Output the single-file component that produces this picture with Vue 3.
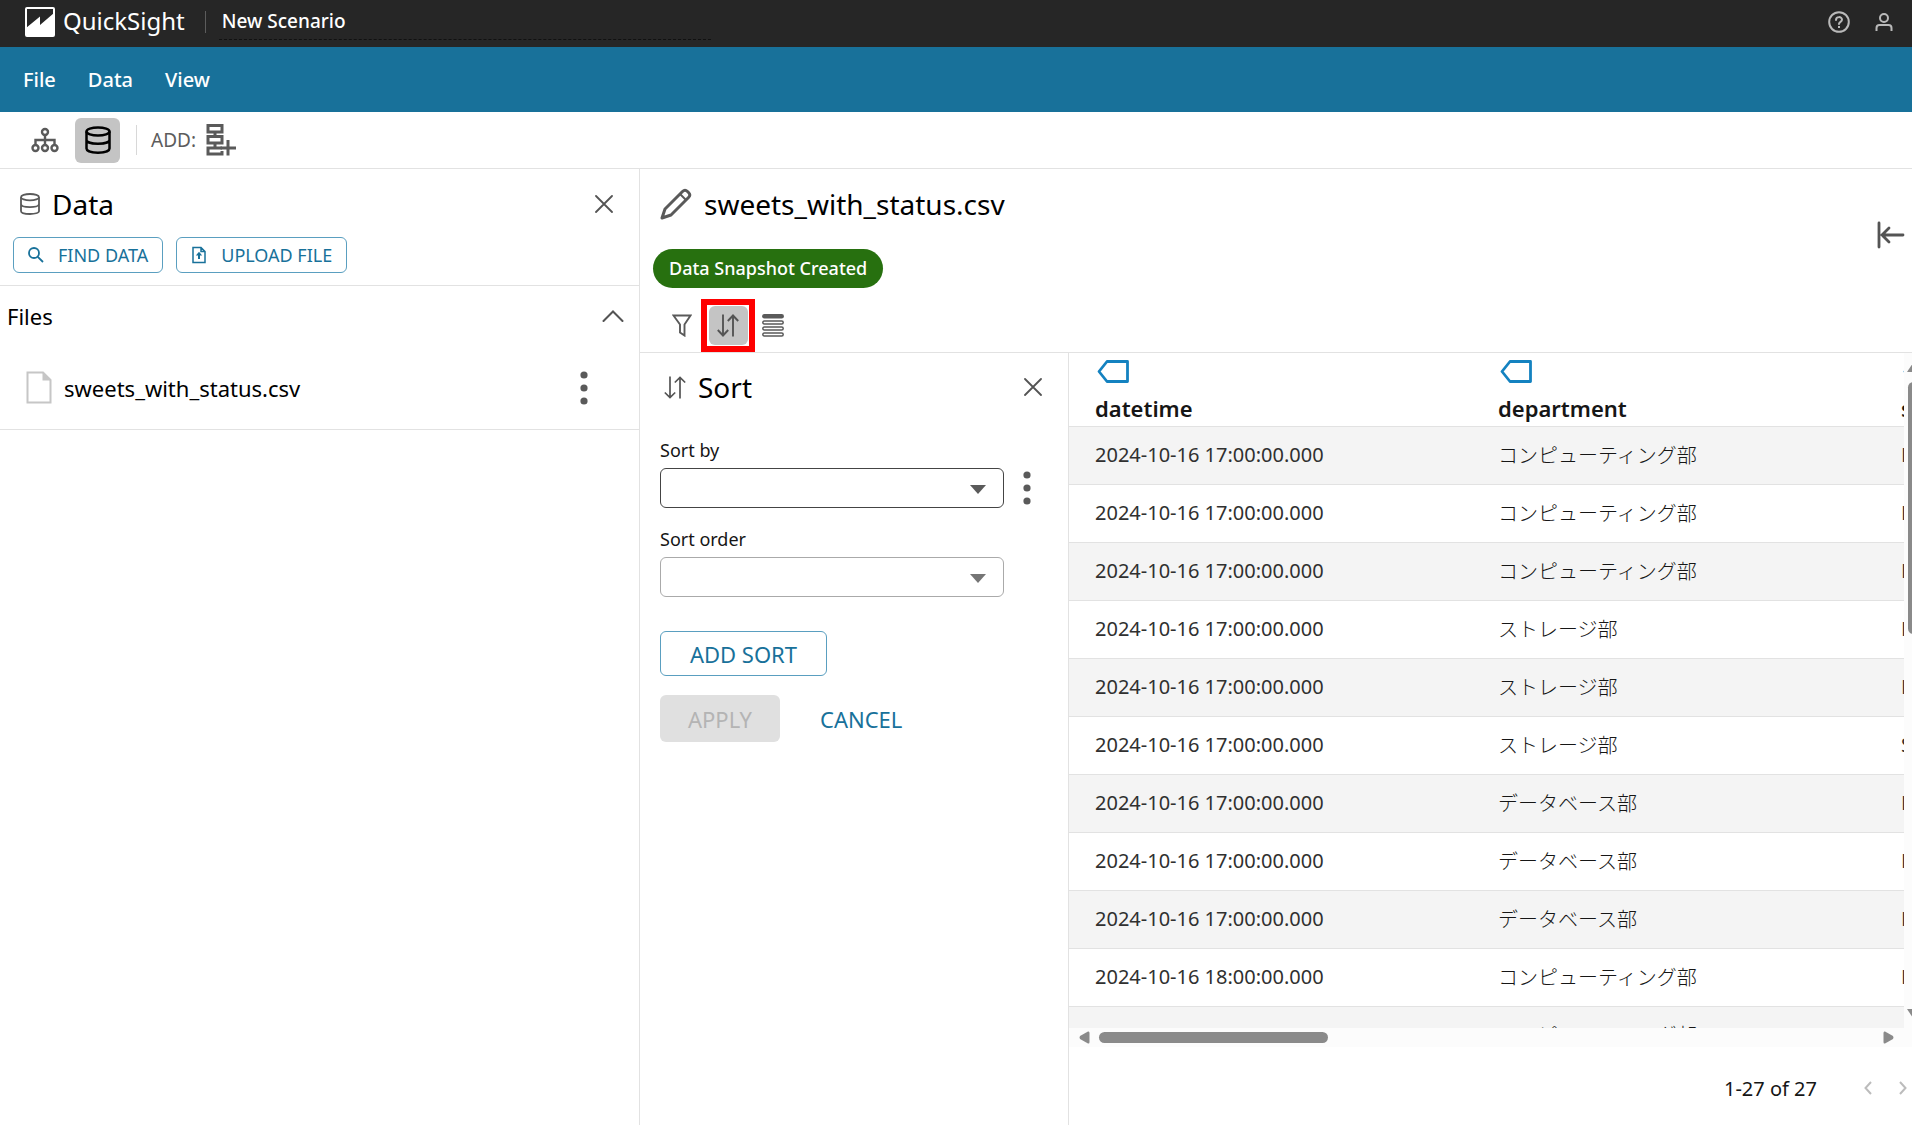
<script setup>
import { ref } from 'vue'

const scenario = ref('New Scenario')
const sortBy = ref('')
const sortOrder = ref('')

const columns = ['datetime', 'department', 's']

const day = '2024-10-16 '
const rows = [
  [day + '17:00:00.000', 'コンピューティング部', 'D'],
  [day + '17:00:00.000', 'コンピューティング部', 'D'],
  [day + '17:00:00.000', 'コンピューティング部', 'D'],
  [day + '17:00:00.000', 'ストレージ部', 'D'],
  [day + '17:00:00.000', 'ストレージ部', 'D'],
  [day + '17:00:00.000', 'ストレージ部', 'S'],
  [day + '17:00:00.000', 'データベース部', 'D'],
  [day + '17:00:00.000', 'データベース部', 'D'],
  [day + '17:00:00.000', 'データベース部', 'D'],
  [day + '18:00:00.000', 'コンピューティング部', 'D'],
  [day + '18:00:00.000', 'コンピューティング部', 'D'],
]
</script>

<template>
  <div class="app">
    <header class="topbar">
      <a class="brand" href="#">
        <svg width="30" height="30" viewBox="0 0 30 30" aria-hidden="true">
          <rect x="1" y="1" width="28" height="28" rx="1" fill="none" stroke="#fff" stroke-width="2" />
          <path d="M1 21 L15 9.500 L15 18 L29 6 V29 H1 Z" fill="#fff" />
        </svg>
        <span>QuickSight</span>
      </a>
      <span class="topbar-sep"></span>
      <input v-model="scenario" class="scenario" type="text" aria-label="Scenario name" />
      <div class="topbar-actions">
        <button type="button" aria-label="Help">
          <svg width="22" height="22" viewBox="0 0 22 22" fill="none" stroke="#b9b9b9" stroke-width="2">
            <circle cx="11" cy="11" r="9.8" />
            <path d="M8 9 C8 5.2 14 5.2 14 8.8 C14 11 11 10.8 11 13" stroke-linecap="round" />
            <rect x="10" y="15" width="2" height="2" fill="#b9b9b9" stroke="none" />
          </svg>
        </button>
        <button type="button" aria-label="Account">
          <svg width="18" height="20" viewBox="0 0 18 20" fill="none" stroke="#b9b9b9" stroke-width="2">
            <circle cx="9" cy="6" r="4" />
            <path d="M1.500 19 V16 Q1.500 13 4.500 13 H13.500 Q16.500 13 16.500 16 V19" />
          </svg>
        </button>
      </div>
    </header>

    <nav class="menubar">
      <a href="#">File</a>
      <a href="#">Data</a>
      <a href="#">View</a>
    </nav>

    <div class="toolbar">
      <button class="tool" type="button" aria-label="Diagram view">
        <svg width="28" height="26" viewBox="0 0 28 26" fill="none" stroke="#5a5a5a" stroke-width="2.400">
          <circle cx="14" cy="5" r="3" />
          <circle cx="4.500" cy="21" r="3" />
          <circle cx="14" cy="21" r="3" />
          <circle cx="23.500" cy="21" r="3" />
          <path d="M14 8 V18 M4.500 18 V13 H23.500 V18" />
        </svg>
      </button>
      <button class="tool active" type="button" aria-label="Data view">
        <svg width="26" height="28" viewBox="0 0 26 28" fill="none" stroke="#000" stroke-width="2.500">
          <ellipse cx="13" cy="5.500" rx="11.500" ry="4" />
          <path d="M1.500 5.500 V22.500 C1.500 28 24.500 28 24.500 22.500 V5.500 M1.500 14 C1.500 19 24.500 19 24.500 14" />
        </svg>
      </button>
      <span class="toolbar-sep"></span>
      <span class="add-label">ADD:</span>
      <button class="tool add" type="button" aria-label="Add step">
        <svg width="30" height="32" viewBox="0 0 30 32" fill="none" stroke="#5a5a5a" stroke-width="3">
          <path d="M2 1.500 H16 V8 H2 Z M2 12.500 H16 V19 H2 Z M9 8 V12.500 M9 19 V24 M16 24 H2 V30 H16 V27" />
          <path d="M22 16 V31.500 M14.500 24 H30" />
        </svg>
      </button>
    </div>

    <main class="workspace">
      <aside class="data-panel">
        <div class="data-head">
          <div class="title-row">
            <svg width="20" height="22" viewBox="0 0 20 22" fill="none" stroke="#5a5a5a" stroke-width="1.800">
              <ellipse cx="10" cy="4.200" rx="9" ry="3.200" />
              <path d="M1 4.200 V18 C1 22 19 22 19 18 V4.200 M1 11 C1 15.200 19 15.200 19 11" />
            </svg>
            <h2>Data</h2>
            <button class="close" type="button" aria-label="Close data panel">
              <svg width="18" height="18" viewBox="0 0 18 18" stroke="#545454" stroke-width="1.800" stroke-linecap="round">
                <path d="M1 1 L17 17 M17 1 L1 17" />
              </svg>
            </button>
          </div>
          <div class="data-actions">
            <button class="outline small" type="button">
              <svg width="16" height="16" viewBox="0 0 16 16" fill="none" stroke="#18719a" stroke-width="1.800">
                <circle cx="6" cy="6" r="5" />
                <path d="M9.800 9.800 L15 15" />
              </svg>
              <span>FIND DATA</span>
            </button>
            <button class="outline small" type="button">
              <svg width="16" height="18" viewBox="0 0 16 18" fill="none" stroke="#18719a" stroke-width="1.500">
                <path d="M2 1.500 H10 L14 5.500 V16.500 H2 Z M10 1.500 V5.500 H14" />
                <path d="M8 13 V9" stroke-width="2" />
                <path d="M4.800 9.500 L8 5.800 L11.200 9.500 Z" fill="#18719a" stroke="none" />
              </svg>
              <span>UPLOAD FILE</span>
            </button>
          </div>
        </div>
        <section class="files">
          <div class="files-head">
            <h3>Files</h3>
            <button type="button" aria-label="Collapse files">
              <svg width="22" height="12" viewBox="0 0 22 12" fill="none" stroke="#545454" stroke-width="2" stroke-linecap="round">
                <path d="M1.500 11 L11 1.500 L20.500 11" />
              </svg>
            </button>
          </div>
          <div class="file-row">
            <svg width="26" height="33" viewBox="0 0 26 33" fill="none" stroke="#c6c6c6" stroke-width="2">
              <path d="M1.500 1.500 H17 L24.500 9 V31.500 H1.500 Z" />
              <path d="M16.500 1 V9.500 H25 Z" fill="#c6c6c6" stroke="none" />
            </svg>
            <span>sweets_with_status.csv</span>
            <button type="button" aria-label="File options">
              <svg width="8" height="34" viewBox="0 0 8 34" fill="#5a5a5a">
                <circle cx="4" cy="4" r="3.600" />
                <circle cx="4" cy="17" r="3.600" />
                <circle cx="4" cy="30" r="3.600" />
              </svg>
            </button>
          </div>
        </section>
      </aside>

      <section class="content">
        <div class="content-head">
          <div class="head-main">
            <div class="title-row">
              <svg width="32" height="32" viewBox="0 0 32 32" fill="none" stroke="#5a5a5a" stroke-width="3" stroke-linejoin="round">
                <path d="M2 30 L5 21 L22.500 3.500 Q25 1 27.500 3.500 L28.500 4.500 Q31 7 28.500 9.500 L11 27 Z" />
                <path d="M20 6 L26 12" stroke-width="2" />
              </svg>
              <h1>sweets_with_status.csv</h1>
            </div>
            <span class="badge">Data Snapshot Created</span>
            <div class="data-tools">
              <button class="data-tool" type="button" aria-label="Filter">
                <svg width="20" height="23" viewBox="0 0 20 23" fill="none" stroke="#5a5a5a" stroke-width="1.900">
                  <path d="M1.500 1.500 H18.500 L12.500 10.500 V21.500 L8 18.500 V10.500 Z" />
                </svg>
              </button>
              <span class="highlight">
                <button class="data-tool active" type="button" aria-label="Sort">
                  <svg width="22" height="23" viewBox="0 0 22 23" fill="none" stroke="#545454" stroke-width="1.900">
                    <path d="M6 0.500 V21.500 M0.800 16 L6 21.500 L11.200 16 M16 22.500 V1.500 M10.800 7 L16 1.500 L21.200 7" />
                  </svg>
                </button>
              </span>
              <button class="data-tool rows" type="button" aria-label="Columns">
                <svg width="22" height="23" viewBox="0 0 22 23" fill="#fff" stroke="#5a5a5a" stroke-width="1.500">
                  <rect x="0.800" y="0.800" width="20.400" height="3" rx="1.500" fill="#5a5a5a" />
                  <rect x="0.800" y="7" width="20.400" height="3" rx="1.500" />
                  <rect x="0.800" y="13" width="20.400" height="3" rx="1.500" />
                  <rect x="0.800" y="19" width="20.400" height="3" rx="1.500" />
                </svg>
              </button>
            </div>
          </div>
          <button class="collapse" type="button" aria-label="Collapse panel">
            <svg width="28" height="28" viewBox="0 0 28 28" fill="none" stroke="#545454" stroke-width="2.800" stroke-linecap="round">
              <path d="M2 2 V26 M26 14 H5 M12 7 L5 14 L12 21" />
            </svg>
          </button>
        </div>

        <div class="content-body">
          <form class="sort-panel" @submit.prevent>
            <div class="title-row">
              <svg width="22" height="23" viewBox="0 0 22 23" fill="none" stroke="#545454" stroke-width="1.700">
                <path d="M6 0.500 V21.500 M0.800 16.500 L6 21.500 L11.200 16.500 M16 22.500 V1.500 M10.800 6.500 L16 1.500 L21.200 6.500" />
              </svg>
              <h2>Sort</h2>
              <button class="close" type="button" aria-label="Close sort panel">
                <svg width="18" height="18" viewBox="0 0 18 18" stroke="#545454" stroke-width="1.800" stroke-linecap="round">
                  <path d="M1 1 L17 17 M17 1 L1 17" />
                </svg>
              </button>
            </div>
            <div class="field">
              <label for="sort-by">Sort by</label>
              <div class="field-row">
                <div class="select">
                  <select id="sort-by" v-model="sortBy">
                    <option value=""></option>
                  </select>
                  <span class="arrow"></span>
                </div>
                <button type="button" aria-label="Sort options">
                  <svg width="8" height="34" viewBox="0 0 8 34" fill="#5a5a5a">
                    <circle cx="4" cy="4" r="3.600" />
                    <circle cx="4" cy="17" r="3.600" />
                    <circle cx="4" cy="30" r="3.600" />
                  </svg>
                </button>
              </div>
            </div>
            <div class="field">
              <label for="sort-order">Sort order</label>
              <div class="field-row">
                <div class="select disabled">
                  <select id="sort-order" v-model="sortOrder" disabled>
                    <option value=""></option>
                  </select>
                  <span class="arrow"></span>
                </div>
              </div>
            </div>
            <button class="outline large" type="button">ADD SORT</button>
            <div class="form-actions">
              <button class="apply" type="submit" disabled>APPLY</button>
              <button class="cancel" type="button">CANCEL</button>
            </div>
          </form>

          <div class="grid-panel">
            <div class="grid-main">
              <div class="table-clip">
                <table>
                  <thead>
                    <tr>
                      <th v-for="name in columns" :key="name" scope="col">
                        <svg width="34" height="23" viewBox="0 0 34 23" fill="none" stroke="#1482c0" stroke-width="2.800" stroke-linejoin="round">
                          <path d="M12 1.500 H32.500 V21.500 H12 L4 11.500 Z" />
                        </svg>
                        <span>{{ name }}</span>
                      </th>
                    </tr>
                  </thead>
                  <tbody>
                    <tr v-for="(row, i) in rows" :key="i">
                      <td v-for="(cell, j) in row" :key="j">{{ cell }}</td>
                    </tr>
                  </tbody>
                </table>
              </div>
              <div class="vscroll">
                <span class="up"></span>
                <span class="vthumb"></span>
                <span class="down"></span>
              </div>
            </div>
            <div class="hscroll">
              <svg width="11" height="13" viewBox="0 0 11 13" fill="#8a8a8a"><path d="M9 0.500 Q10.500 0 10.500 2 V11 Q10.500 13 9 12.500 L1 8 Q0 6.500 1 5 Z" /></svg>
              <span class="hthumb"></span>
              <svg class="right" width="11" height="13" viewBox="0 0 11 13" fill="#8a8a8a"><path d="M2 0.500 Q0.500 0 0.500 2 V11 Q0.500 13 2 12.500 L10 8 Q11 6.500 10 5 Z" /></svg>
            </div>
            <div class="pager">
              <span>1-27 of 27</span>
              <button type="button" disabled aria-label="Previous page">
                <svg width="8" height="14" viewBox="0 0 8 14" fill="none" stroke="#bcbcbc" stroke-width="2"><path d="M7 1 L1.500 7 L7 13" /></svg>
              </button>
              <button type="button" disabled aria-label="Next page">
                <svg width="8" height="14" viewBox="0 0 8 14" fill="none" stroke="#bcbcbc" stroke-width="2"><path d="M1 1 L6.500 7 L1 13" /></svg>
              </button>
            </div>
          </div>
        </div>
      </section>
    </main>
  </div>
</template>

<style>
body {
  margin: 0;
  background: #fff;
}
</style>

<style scoped>
.app {
  display: flex;
  flex-direction: column;
  height: 100vh;
  overflow: hidden;
  font-family: "Noto Sans", "Noto Sans CJK JP", sans-serif;
  font-size: 20px;
  color: #000;
}

.app *,
.app {
  box-sizing: border-box;
}

button,
input,
select {
  font: inherit;
  color: inherit;
  margin: 0;
}

button {
  display: flex;
  align-items: center;
  justify-content: center;
  padding: 0;
  border: 0;
  background: none;
}

svg {
  display: block;
  flex: none;
}

h1,
h2,
h3 {
  margin: 0;
  font-weight: 400;
}

a {
  color: inherit;
  text-decoration: none;
}

.topbar {
  display: flex;
  flex: none;
  align-items: center;
  height: 47px;
  padding: 0 19px 4px 25px;
  background: #262626;
  color: #fff;
}

.brand {
  display: flex;
  align-items: center;
  gap: 8px;
  font-size: 24px;
  line-height: 32px;
}

.brand span {
  padding-bottom: 2px;
}

.topbar-sep {
  width: 1px;
  height: 22px;
  margin: 0 13px 0 20px;
  background: #5c5c5c;
}

.scenario {
  width: 492px;
  height: 36px;
  padding: 0 3px;
  border: 0;
  border-bottom: 1px dashed #111;
  background: none;
  font-size: 19px;
  font-weight: 500;
}

.topbar-actions {
  display: flex;
  align-items: center;
  gap: 25px;
  margin-left: auto;
}

.menubar {
  display: flex;
  flex: none;
  align-items: center;
  gap: 32px;
  height: 65px;
  padding: 0 23px;
  background: #18719a;
  color: #fff;
  font-weight: 500;
  line-height: 28px;
}

.toolbar {
  display: flex;
  flex: none;
  align-items: center;
  height: 57px;
  padding: 0 15px;
  border-bottom: 1px solid #e2e2e2;
}

.tool {
  width: 45px;
  height: 45px;
  border-radius: 6px;
}

.tool:first-child {
  margin: 0 8px 0 7px;
}

.tool.active {
  background: #c4c4c4;
}

.tool.add {
  margin-left: 3px;
}

.toolbar-sep {
  width: 1px;
  height: 30px;
  margin: 0 14px 0 16px;
  background: #d8d8d8;
}

.add-label {
  color: #5c5c5c;
  font-size: 19px;
}

.workspace {
  display: flex;
  flex: 1;
  min-height: 0;
}

.data-panel {
  flex: none;
  width: 640px;
  border-right: 1px solid #e2e2e2;
}

.title-row {
  display: flex;
  align-items: center;
}

.title-row h1,
.title-row h2 {
  font-size: 28px;
  line-height: 38px;
}

.close {
  margin-left: auto;
}

.data-head {
  padding: 16px 13px 12px;
  border-bottom: 1px solid #e2e2e2;
}

.data-head .title-row {
  padding: 0 13px 0 7px;
}

.data-head .title-row h2 {
  margin-left: 12px;
}

.data-actions {
  display: flex;
  gap: 13px;
  margin-top: 14px;
}

.outline {
  border: 1px solid #5a9fc0;
  border-radius: 6px;
  color: #18719a;
}

.outline.small {
  gap: 14px;
  height: 36px;
  padding: 0 14px;
  font-size: 18px;
}

.outline.large {
  width: 167px;
  height: 45px;
  margin-top: 34px;
  font-size: 22px;
}

.files-head {
  display: flex;
  align-items: center;
  justify-content: space-between;
  height: 60px;
  padding: 0 15px 0 7px;
}

.files-head h3,
.file-row span {
  font-size: 22px;
  line-height: 30px;
}

.file-row {
  display: flex;
  align-items: center;
  gap: 12px;
  height: 84px;
  padding: 0 51px 0 26px;
  border-bottom: 1px solid #e2e2e2;
}

.file-row button {
  margin-left: auto;
}

.content {
  display: flex;
  flex: 1;
  flex-direction: column;
  min-width: 0;
}

.content-head {
  display: flex;
  flex: none;
  justify-content: space-between;
  padding: 16px 7px 0 13px;
  border-bottom: 1px solid #e2e2e2;
}

.content-head .title-row {
  padding-left: 7px;
}

.content-head h1 {
  margin-left: 12px;
}

.badge {
  display: inline-block;
  margin: 26px 0 11px;
  padding: 0 16px;
  border-radius: 20px;
  background: #27700f;
  color: #fff;
  font-size: 18px;
  font-weight: 500;
  line-height: 39px;
}

.data-tools {
  display: flex;
  align-items: center;
  padding-left: 9px;
}

.data-tool {
  width: 39px;
  height: 39px;
  border-radius: 6px;
}

.data-tool.rows {
  width: 35px;
}

.data-tool.active {
  background: #c4c4c4;
}

.highlight {
  display: flex;
  align-items: center;
  justify-content: center;
  width: 54px;
  height: 53px;
  border: 6px solid #fe0000;
}

.collapse {
  align-self: flex-start;
  margin-top: 36px;
}

.content-body {
  display: flex;
  flex: 1;
  min-height: 0;
}

.sort-panel {
  flex: none;
  width: 429px;
  padding: 15px 20px;
  border-right: 1px solid #e2e2e2;
}

.sort-panel .title-row {
  gap: 12px;
  padding: 0 6px 0 4px;
  margin-bottom: 32px;
}

.field {
  margin-bottom: 19px;
}

.field label {
  display: block;
  margin-bottom: 6px;
  color: #161616;
  font-size: 18px;
  line-height: 24px;
}

.field-row {
  display: flex;
  align-items: center;
  gap: 19px;
}

.select {
  position: relative;
  width: 344px;
}

.select select {
  display: block;
  width: 100%;
  height: 40px;
  border: 1px solid #444;
  border-radius: 6px;
  background: #fff;
  appearance: none;
  opacity: 1;
}

.select.disabled select {
  border-color: #aaa;
}

.arrow {
  position: absolute;
  top: 17px;
  right: 18px;
  border: 8px solid transparent;
  border-top: 9px solid #5a5a5a;
  border-bottom: 0;
  pointer-events: none;
}

.disabled .arrow {
  border-top-color: #757575;
}

.form-actions {
  display: flex;
  gap: 40px;
  margin-top: 19px;
}

.apply {
  width: 120px;
  height: 47px;
  border-radius: 6px;
  background: #e0e0e0;
  color: #b4b4b4;
  font-size: 22px;
}

.cancel {
  color: #18719a;
  font-size: 22px;
}

.grid-panel {
  display: flex;
  flex: 1;
  flex-direction: column;
  min-width: 0;
}

.grid-main {
  display: flex;
  flex: 1;
  min-height: 0;
}

.table-clip {
  flex: 1;
  min-width: 0;
  overflow: hidden;
}

table {
  width: 1209px;
  border-spacing: 0;
  table-layout: fixed;
}

th {
  height: 74px;
  padding: 7px 0 3px 26px;
  border-bottom: 1px solid #e2e2e2;
  color: #161616;
  font-size: 22px;
  font-weight: 600;
  line-height: 30px;
  text-align: left;
}

th svg {
  margin: 0 0 10px;
}

td {
  height: 58px;
  padding: 0 0 2px 26px;
  border-bottom: 1px solid #e2e2e2;
  color: #303030;
  line-height: 28px;
  white-space: nowrap;
}

td:nth-child(2) {
  color: #161616;
  font-family: "Noto Sans CJK JP", sans-serif;
  font-weight: 300;
}

tbody tr:nth-child(odd) {
  background: #f4f4f4;
}

.vscroll {
  display: flex;
  flex: none;
  flex-direction: column;
  align-items: flex-start;
  width: 8px;
  padding: 10px 0 10px 3px;
  overflow: hidden;
  background: #fcfcfc;
}

.up,
.down {
  flex: none;
  border: 6px solid transparent;
}

.up {
  border-top: 0;
  border-bottom: 9px solid #8a8a8a;
}

.down {
  margin-top: auto;
  border-bottom: 0;
  border-top: 9px solid #8a8a8a;
}

.vthumb {
  flex: none;
  width: 11px;
  height: 252px;
  margin: 10px 0 0 1px;
  border-radius: 6px;
  background: #8a8a8a;
}

.hscroll {
  display: flex;
  flex: none;
  align-items: center;
  gap: 9px;
  height: 19px;
  padding: 0 18px 0 10px;
  background: #fcfcfc;
}

.hthumb {
  width: 229px;
  height: 11px;
  border-radius: 6px;
  background: #8a8a8a;
}

.right {
  margin-left: auto;
}

.pager {
  display: flex;
  flex: none;
  align-items: center;
  justify-content: flex-end;
  height: 78px;
  padding: 4px 5px 0 0;
  color: #161616;
}

.pager button {
  width: 8px;
  margin-left: 27px;
}

.pager span {
  margin-right: 20px;
}
</style>
